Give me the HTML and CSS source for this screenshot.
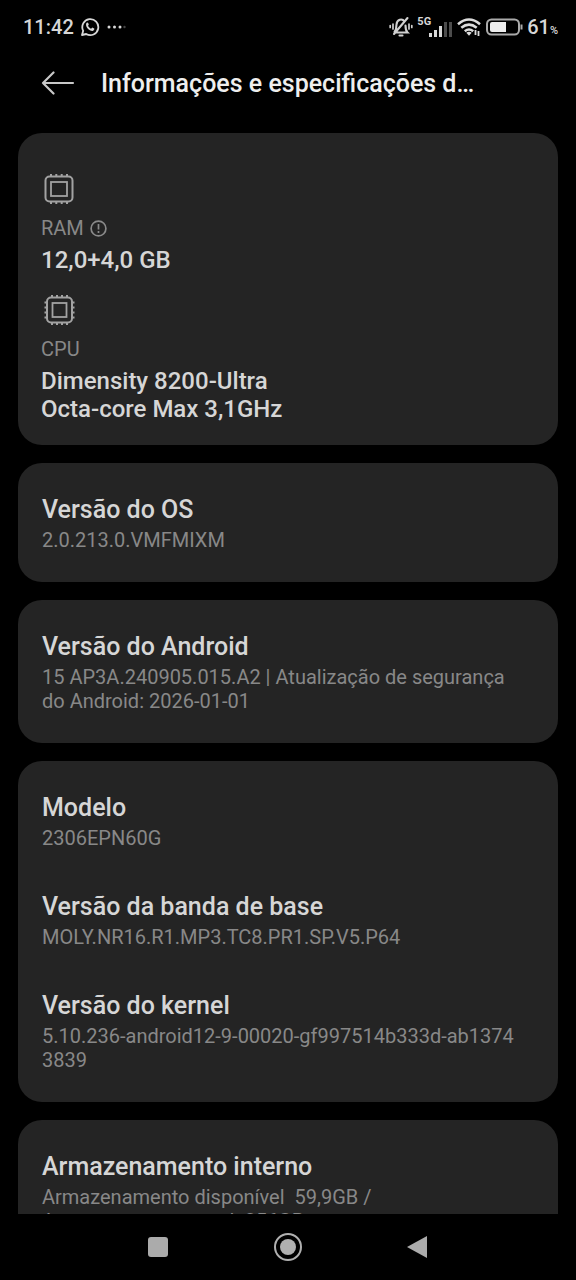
FILE: index.html
```html
<!DOCTYPE html>
<html lang="pt-BR">
<head>
<meta charset="utf-8">
<meta name="viewport" content="width=device-width, initial-scale=1">
<title>Informações e especificações</title>
<link rel="stylesheet" href="styles.css">
</head>
<body>
<div class="status">
  <div class="status-left">
    <span class="clock">11:42</span>
    <svg width="20" height="20" viewBox="0 0 20 20" fill="none" stroke="#d8d8d8" stroke-width="1.800">
      <path d="M2 18l1.200-4.200A8 8 0 1 1 6.200 17z" stroke-linejoin="round"/>
      <path d="M6.300 6.200c.7-1.200 1.600-1 2 .1l.5 1.400-.8 1.100c.8 1.500 1.800 2.300 3.100 2.900l1.100-1.100 2 1c.5.400-.3 2-1.500 2.400-3.200.3-7.800-4.300-6.400-7.800z" fill="#d8d8d8" stroke="none"/>
    </svg>
    <svg width="20" height="4" viewBox="0 0 20 4" fill="#d8d8d8"><circle cx="3" cy="2" r="1.500"/><circle cx="8.500" cy="2" r="1.500"/><circle cx="14" cy="2" r="1.500"/><circle cx="18.500" cy="2" r="1.200" fill="#444"/></svg>
  </div>
  <div class="status-right">
    <svg width="24" height="22" viewBox="0 0 24 22" fill="none" stroke="#d0d0d0" stroke-width="2.100" stroke-linecap="round">
      <path d="M6 16.500h12.500c-2-2-2-3.500-2-7M15.500 5.500C13 2 8 3.500 7.500 8.500c0 3 0 5-2 7.500M10.500 19.500h3M18.500 2L5 18"/>
      <path d="M4 8v5M1.200 9.500v2M20 8v5M22.800 9.500v2" stroke-width="1.700"/>
    </svg>
    <div class="network">
      <span class="network-type">5G</span>
      <svg width="30" height="20" viewBox="0 0 30 20" fill="#d8d8d8"><path d="M6 16h3v4H6zM11 13h3v7h-3zM16 9h3v11h-3z"/><path d="M21 5h3v15h-3zM26 5h3v15h-3z" fill="#4c4c4c"/></svg>
    </div>
    <svg class="wifi" width="24" height="18" viewBox="0 0 24 18" fill="none" stroke="#dcdcdc" stroke-width="2.600">
      <path d="M1 6.200Q12-3.200 23 6.200M4.300 9.800q7.700-6.300 15.400 0M7.800 13.200q4.200-3.400 8.400 0"/>
      <path d="M9.300 14.800q2.700-2 5.400 0L12 17.800z" fill="#dcdcdc" stroke="none"/>
      <path d="M18.500 12v5M21.500 13v5" stroke-width="1.800"/>
    </svg>
    <svg class="battery" width="38" height="18" viewBox="0 0 38 18" fill="none">
      <rect x="2" y="1.500" width="32" height="15" rx="4.500" stroke="#aaa" stroke-width="2"/>
      <path d="M5 6q0-2 2-2h14v10H7q-2 0-2-2z" fill="#ededed"/>
      <path d="M36.500 6.500v5" stroke="#aaa" stroke-width="2"/>
    </svg>
    <span class="level">61<small>%</small></span>
  </div>
</div>

<header class="header">
  <button class="back" aria-label="Voltar">
    <svg width="34" height="24" viewBox="0 0 34 24" fill="none" stroke="#c8c8c8" stroke-width="2.200" stroke-linecap="round" stroke-linejoin="round"><path d="M32 12H2M12.500 1.500L2 12l10.500 10.500"/></svg>
  </button>
  <h1 class="title">Informações e especificações d…</h1>
</header>

<main class="content">
  <section class="card hardware">
    <div class="spec">
      <svg class="chip" width="36" height="34" viewBox="0 0 36 34" fill="none" stroke="#a2a2a2" stroke-width="2">
        <rect x="4.500" y="4.500" width="27" height="25" rx="4"/><rect x="10" y="10" width="16" height="14" stroke-width="1.800"/>
        <path d="M10 2v2.500M15.300 2v2.500M20.700 2v2.500M26 2v2.500M10 29.500V32M15.300 29.500V32M20.700 29.500V32M26 29.500V32"/>
      </svg>
      <p class="label">RAM
        <svg width="17" height="17" viewBox="0 0 17 17" fill="none" stroke="#8a8a8a" stroke-width="1.700"><circle cx="8.500" cy="8.500" r="7.400"/><path d="M8.500 4v5.600M8.500 11v2"/></svg>
      </p>
      <p class="value">12,0+4,0 GB</p>
    </div>
    <div class="spec">
      <svg class="chip" width="36" height="34" viewBox="0 0 36 34" fill="none" stroke="#a2a2a2" stroke-width="2">
        <rect x="6" y="4.500" width="25" height="25" rx="4"/><rect x="11.500" y="10" width="14" height="14" stroke-width="1.800"/>
        <path d="M11 2v2.500M16 2v2.500M21 2v2.500M26 2v2.500M11 29.500V32M16 29.500V32M21 29.500V32M26 29.500V32M3.500 9.500H6M3.500 14.500H6M3.500 19.500H6M3.500 24.500H6M31 9.500h2.500M31 14.500h2.500M31 19.500h2.500M31 24.500h2.500"/>
      </svg>
      <p class="label">CPU</p>
      <p class="value">Dimensity 8200-Ultra<br>Octa-core Max 3,1GHz</p>
    </div>
  </section>

  <section class="card">
    <div class="row"><h2 class="name">Versão do OS</h2><p class="detail">2.0.213.0.VMFMIXM</p></div>
  </section>

  <section class="card">
    <div class="row"><h2 class="name">Versão do Android</h2><p class="detail">15 AP3A.240905.015.A2 | Atualização de segurança do Android: 2026-01-01</p></div>
  </section>

  <section class="card">
    <div class="row"><h2 class="name">Modelo</h2><p class="detail">2306EPN60G</p></div>
    <div class="row"><h2 class="name">Versão da banda de base</h2><p class="detail">MOLY.NR16.R1.MP3.TC8.PR1.SP.V5.P64</p></div>
    <div class="row"><h2 class="name">Versão do kernel</h2><p class="detail">5.10.236-android12-9-00020-gf997514b333d-ab1374<wbr>3839</p></div>
  </section>

  <section class="card">
    <div class="row"><h2 class="name">Armazenamento interno</h2><p class="detail">Armazenamento disponível&nbsp; 59,9GB /<br>Armazenamento total&nbsp; 256GB</p></div>
  </section>
</main>

<nav class="navbar">
  <button aria-label="Recentes"><svg width="30" height="30" viewBox="0 0 30 30"><rect x="5" y="5" width="20" height="20" rx="3" fill="#ababab"/></svg></button>
  <button aria-label="Início"><svg width="30" height="30" viewBox="0 0 30 30"><circle cx="15" cy="15" r="13" fill="none" stroke="#b0b0b0" stroke-width="2"/><circle cx="15" cy="15" r="8" fill="#b0b0b0"/></svg></button>
  <button aria-label="Voltar"><svg width="30" height="30" viewBox="0 0 30 30"><path d="M24 4v22L4 15z" fill="#ababab"/></svg></button>
</nav>
</body>
</html>
```
FILE: styles.css
```css
* {
  box-sizing: border-box;
}

body {
  margin: 0;
  height: 100vh;
  display: flex;
  flex-direction: column;
  overflow: hidden;
  background: #000;
  color: #d6d6d6;
  font-family: Roboto, "Noto Sans", sans-serif;
}

h1, h2, p {
  margin: 0;
  font-weight: 500;
}

svg {
  display: block;
  flex: none;
}

button {
  padding: 0;
  border: 0;
  background: none;
}

.status {
  flex: none;
  height: 54px;
  padding: 0 18px 0 23px;
  display: flex;
  justify-content: space-between;
  align-items: center;
}

.status-left,
.status-right {
  display: flex;
  align-items: center;
}

.status-left {
  gap: 6px;
}

.clock,
.level {
  font-size: 20px;
  line-height: 24px;
  font-weight: 500;
}

.status-right {
  gap: 4px;
}

.network {
  display: flex;
  align-items: flex-start;
}

.network-type {
  margin-right: -8px;
  font-size: 11px;
  line-height: 10px;
  font-weight: 700;
}

.level {
  display: flex;
  align-items: baseline;
}

.level small {
  font-size: 11px;
  line-height: 12px;
}

.header {
  flex: none;
  height: 79px;
  padding: 0 41px;
  display: flex;
  align-items: flex-start;
  gap: 26px;
}

.back {
  height: 58px;
}

.title {
  color: #eee;
  font-size: 25px;
  line-height: 60px;
  white-space: nowrap;
}

.content {
  flex: 1;
  min-height: 0;
  overflow: hidden;
  padding: 0 18px;
  display: flex;
  flex-direction: column;
  gap: 18px;
}

.card {
  flex: none;
  padding: 32px 32px 30px 24px;
  display: flex;
  flex-direction: column;
  gap: 42px;
  border-radius: 24px;
  background: #242424;
}

.hardware {
  padding: 39px 23px 22px;
  gap: 19px;
}

.chip {
  margin-bottom: 10px;
}

.label {
  display: flex;
  align-items: center;
  gap: 6px;
  margin-bottom: 6px;
  color: #888;
  font-size: 20px;
  line-height: 24px;
  font-weight: 400;
}

.value {
  font-size: 24px;
  line-height: 28px;
}

.name {
  margin-bottom: 3px;
  font-size: 25px;
  line-height: 30px;
}

.detail {
  color: #888;
  font-size: 20px;
  line-height: 24px;
  font-weight: 400;
}

.navbar {
  flex: none;
  height: 66px;
  padding: 0 93px;
  display: flex;
}

.navbar button {
  flex: 1;
  display: flex;
  align-items: center;
  justify-content: center;
}
```
